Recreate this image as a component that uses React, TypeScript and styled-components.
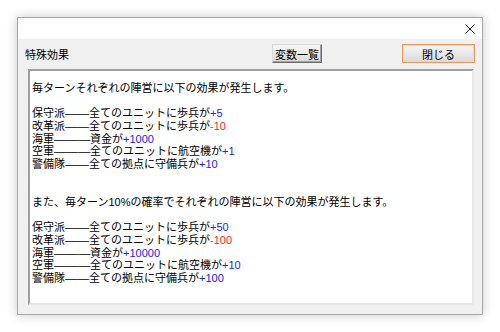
import React, { FunctionComponent } from 'react';
import styled, { createGlobalStyle } from 'styled-components';

const GlobalStyle = createGlobalStyle`
	html, body {
		margin: 0;
		padding: 0;
		background: #ffffff;
	}
	body {
		font-family: "Liberation Sans", "Noto Sans CJK JP", sans-serif;
	}
`;

interface Effect {
	unit: string;
	dashes: number;
	text: string;
	value: string;
}

const everyTurn: Effect[] = [
	{ unit: '保守派', dashes: 2, text: '全てのユニットに歩兵が', value: '+5' },
	{ unit: '改革派', dashes: 2, text: '全てのユニットに歩兵が', value: '-10' },
	{ unit: '海軍', dashes: 3, text: '資金が', value: '+1000' },
	{ unit: '空軍', dashes: 3, text: '全てのユニットに航空機が', value: '+1' },
	{ unit: '警備隊', dashes: 2, text: '全ての拠点に守備兵が', value: '+10' },
];

const byChance: Effect[] = [
	{ unit: '保守派', dashes: 2, text: '全てのユニットに歩兵が', value: '+50' },
	{ unit: '改革派', dashes: 2, text: '全てのユニットに歩兵が', value: '-100' },
	{ unit: '海軍', dashes: 3, text: '資金が', value: '+10000' },
	{ unit: '空軍', dashes: 3, text: '全てのユニットに航空機が', value: '+10' },
	{ unit: '警備隊', dashes: 2, text: '全ての拠点に守備兵が', value: '+100' },
];

const Stage = styled.div`
	padding: 17px;
	width: 466px;
`;

const Window = styled.div`
	display: flex;
	flex-direction: column;
	width: 466px;
	height: 298px;
	box-sizing: border-box;
	border: 1px solid #a8a8a8;
	background: #f0f0f0;
	box-shadow: 0 0 10px rgba(0, 0, 0, 0.22);
`;

const TitleBar = styled.div`
	display: flex;
	justify-content: flex-end;
	align-items: center;
	height: 21px;
	background: #ffffff;
	padding-right: 7px;
`;

const CloseGlyph = styled.svg`
	display: block;
	width: 10px;
	height: 10px;
`;

const Body = styled.div`
	flex: 1;
	display: flex;
	flex-direction: column;
	padding: 5px 7px 9px 7px;
`;

const Header = styled.div`
	display: flex;
	align-items: flex-end;
	height: 19px;
`;

const Caption = styled.span`
	font-size: 11px;
	color: #000;
	line-height: 13px;
	padding-bottom: 1px;
	flex: 1;
`;

const Button = styled.button<{ $primary?: boolean; $width: number }>`
	width: ${props => props.$width}px;
	height: 19px;
	margin-left: ${props => props.$primary ? 80 : 0}px;
	padding: 0;
	font-family: "Liberation Sans", "Noto Sans CJK JP", sans-serif;
	font-size: 11px;
	color: #000;
	background: linear-gradient(#f6f6f6, #dadada);
	border: 1px solid ${props => props.$primary ? '#e59a62' : '#6e6e6e'};
	border-top-color: ${props => props.$primary ? '#e59a62' : '#d8d8d8'};
	border-left-color: ${props => props.$primary ? '#e59a62' : '#d8d8d8'};
	box-shadow: ${props => props.$primary ? 'inset 0 0 0 1px #f6d2b5' : 'inset -1px -1px 0 #a0a0a0'};
`;

const TextBox = styled.div`
	margin: 6px 1px 0 3px;
	flex: 1;
	background: #ffffff;
	border-top: 2px solid #a0a0a0;
	border-left: 2px solid #a0a0a0;
	border-right: 2px solid #e8e8e8;
	border-bottom: 2px solid #e8e8e8;
	padding: 11px 4px 0 2px;
	font-size: 11px;
	line-height: 12.67px;
	color: #000;
	overflow: hidden;
`;

const Line = styled.div`
	white-space: nowrap;
	height: 12.67px;
`;

const Dash = styled.span<{ $count: number }>`
	display: inline-block;
	width: ${props => props.$count * 12}px;
	font-family: "Liberation Sans", sans-serif;
	transform: scaleX(1.1);
	transform-origin: left center;
`;

const Blank = styled.div<{ $lines: number }>`
	height: ${props => props.$lines * 12.67}px;
`;

const Value = styled.span<{ $negative: boolean }>`
	color: ${props => props.$negative ? '#ff1a1a' : '#2020ff'};
`;

const EffectList: FunctionComponent<{ effects: Effect[] }> = ({ effects }) => (
	<>
		{effects.map(effect => (
			<Line key={effect.unit}>
				{effect.unit}
				<Dash $count={effect.dashes}>{'—'.repeat(effect.dashes)}</Dash>
				{effect.text}
				<Value $negative={effect.value.startsWith('-')}>{effect.value}</Value>
			</Line>
		))}
	</>
);

const App: FunctionComponent = () => (
	<Stage>
		<GlobalStyle />
		<Window>
			<TitleBar>
				<CloseGlyph viewBox="0 0 10 10">
					<path d="M0.5 0.5 L9.5 9.5 M9.5 0.5 L0.5 9.5" stroke="#222" strokeWidth="1" fill="none" />
				</CloseGlyph>
			</TitleBar>
			<Body>
				<Header>
					<Caption>特殊効果</Caption>
					<Button $width={50}>変数一覧</Button>
					<Button $primary $width={73}>閉じる</Button>
				</Header>
				<TextBox>
					<Line>毎ターンそれぞれの陣営に以下の効果が発生します。</Line>
					<Blank $lines={1} />
					<EffectList effects={everyTurn} />
					<Blank $lines={2} />
					<Line>また、毎ターン10%の確率でそれぞれの陣営に以下の効果が発生します。</Line>
					<Blank $lines={1} />
					<EffectList effects={byChance} />
				</TextBox>
			</Body>
		</Window>
	</Stage>
);

export default App;
